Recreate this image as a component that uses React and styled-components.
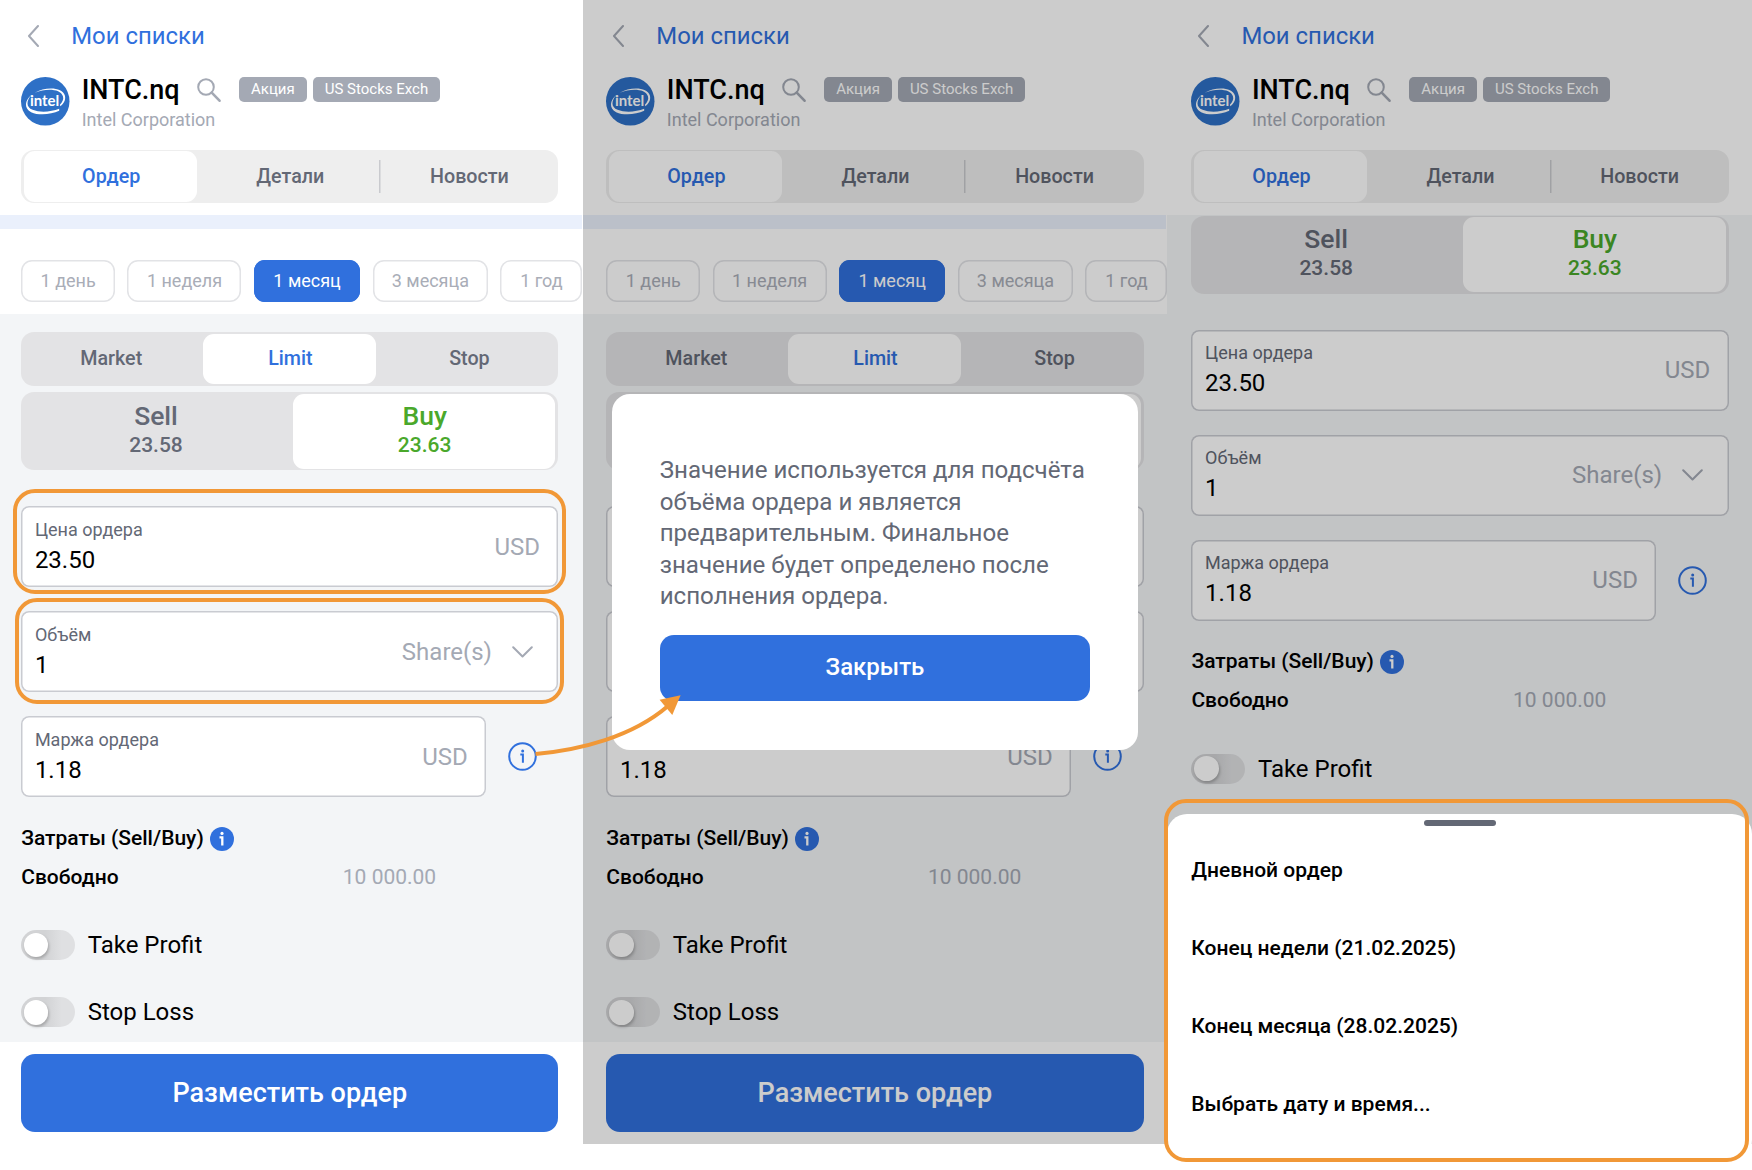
import React from "react";
import styled, { createGlobalStyle } from "styled-components";

const GlobalStyle = createGlobalStyle`
  * {
    box-sizing: border-box;
  }

  body {
    margin: 0;
    background: #fff;
    font-family: Roboto, "Liberation Sans", sans-serif;
    color: #000;
  }

  button {
    font-family: inherit;
    border: 0;
    padding: 0;
    margin: 0;
    background: none;
  }

  p {
    margin: 0;
  }
`;

const Board = styled.div`
  position: relative;
  width: 1752px;
  height: 1170px;
  display: flex;
  align-items: flex-start;
  overflow: hidden;
`;

const Phone = styled.div`
  position: relative;
  flex: none;
  width: ${({ $width }) => $width}px;
  height: 1144px;
`;

const Screen = styled.div`
  height: 100%;
  display: flex;
  flex-direction: column;
  overflow: hidden;
  background: #fff;
  --inset: ${({ $inset }) => $inset}px;
`;

const Header = styled.div`
  flex: none;
  height: 215px;
  padding-left: var(--inset);
  background: #fff;
`;

const NavRow = styled.div`
  height: 71px;
  padding-left: 6px;
  display: flex;
  align-items: center;
  gap: 32px;
  color: #3070dd;
  font-size: 23.9px;
`;

const Instrument = styled.div`
  height: 78.5px;
  padding-top: 6px;
  display: flex;
  gap: 12px;
`;

const NameLine = styled.div`
  height: 31px;
  margin-top: -3px;
  display: flex;
  align-items: center;
`;

const Ticker = styled.span`
  width: 115.4px;
  font-size: 27px;
  font-weight: 500;
`;

const Badges = styled.div`
  display: flex;
  gap: 6px;
  margin-left: 18px;
`;

const Badge = styled.span`
  height: 24.5px;
  padding: 0 12px;
  border-radius: 5px;
  background: #a4a9b4;
  color: #fff;
  font-size: 15px;
  line-height: 24px;
  white-space: nowrap;
`;

const Company = styled.div`
  margin-top: 4px;
  font-size: 18px;
  line-height: 22px;
  color: #a4a9b4;
`;

const Segmented = styled.div`
  width: 537.3px;
  height: ${({ $height }) => $height || 53.5}px;
  display: grid;
  grid-auto-flow: column;
  grid-auto-columns: 1fr;
  border-radius: 13px;
  background: ${({ $tone }) => $tone || "#e3e3e5"};
`;

const Segment = styled.button`
  margin: 1.5px 3px;
  padding-left: 1px;
  border-radius: 11px;
  display: flex;
  flex-direction: column;
  align-items: center;
  justify-content: center;
  font-size: 19.7px;
  font-weight: 500;
  color: ${({ $active }) => ($active ? "#3070dd" : "#636875")};
  background: ${({ $active }) => ($active ? "#fff" : "none")};
`;

const DividedSegment = styled(Segment)`
  margin-left: 0;
  padding-left: 4px;
  border-radius: 0;
  background: linear-gradient(#c9cace, #c9cace) left center / 1.5px 33px no-repeat;
`;

const SideSegment = styled(Segment)`
  justify-content: flex-start;
  padding-top: 6px;
  line-height: 31px;
  font-size: 26.5px;
  color: ${({ $active }) => ($active ? "#4aa82b" : "#636875")};

  small {
    margin-top: 1px;
    font-size: 21px;
    line-height: 27px;
  }
`;

const Strip = styled.div`
  flex: none;
  height: 14px;
  margin-right: 1px;
  background: #eaf0fc;
`;

const Periods = styled.div`
  flex: none;
  height: 85px;
  padding: 31px 0 0 var(--inset);
  display: flex;
  gap: 12.3px;
  background: #fff;
`;

const Period = styled.button`
  flex: none;
  width: ${({ $width }) => $width}px;
  height: 42px;
  padding-bottom: 1.5px;
  border-radius: 11px;
  font-size: 18px;
  color: ${({ $active }) => ($active ? "#fff" : "#a9adb7")};
  background: ${({ $active }) => ($active ? "#3070dd" : "#fff")};
  box-shadow: inset 0 0 0 1.5px ${({ $active }) => ($active ? "#3070dd" : "#e2e3e6")};
`;

const Body = styled.div`
  flex: 1;
  min-height: 0;
  overflow: hidden;
  padding: ${({ $top }) => $top}px 0 0 var(--inset);
  background: #f3f5f7;
`;

const TypeRow = styled.div`
  height: 60px;
`;

const Fields = styled.div`
  padding-top: 36px;
  display: grid;
  row-gap: 24px;
`;

const FieldRow = styled.div`
  display: flex;
  align-items: center;
  gap: 21.5px;
`;

const Field = styled.div`
  position: relative;
  width: ${({ $narrow }) => ($narrow ? 465 : 537.3)}px;
  height: 81px;
  padding: 0 18.5px 0 13.7px;
  display: flex;
  align-items: center;
  justify-content: space-between;
  border-radius: 8px;
  background: #fff;
  box-shadow: inset 0 0 0 1.5px #c9cbd1;
`;

const FieldLabel = styled.div`
  margin-top: 3px;
  font-size: 18px;
  line-height: 22px;
  color: #636875;
`;

const FieldValue = styled.div`
  margin-top: 1px;
  font-size: 24px;
  line-height: 36px;
`;

const Unit = styled.div`
  display: flex;
  align-items: center;
  gap: 20px;
  padding-right: ${({ $select }) => ($select ? 7 : 0)}px;
  font-size: 24px;
  color: #a4a9b4;
`;

const Highlight = styled.div`
  position: absolute;
  top: ${({ $top }) => $top}px;
  left: ${({ $left }) => $left}px;
  width: ${({ $width }) => $width}px;
  height: ${({ $height }) => $height}px;
  border: 4px solid #f19837;
  border-radius: 22px;
`;

const Costs = styled.div`
  padding-top: 21px;
  font-size: 21px;
  font-weight: 500;
`;

const CostLine = styled.div`
  height: 39px;
  display: flex;
  align-items: center;
  gap: 6px;

  svg {
    margin-top: 2px;
  }
`;

const Amount = styled.span`
  margin-left: auto;
  font-weight: 400;
  color: #a4a9b4;
`;

const FreeLine = styled(CostLine)`
  width: 415px;
`;

const Toggles = styled.div`
  padding-top: 34px;
  display: grid;
  row-gap: 37.3px;
`;

const ToggleRow = styled.label`
  height: 30px;
  display: flex;
  align-items: center;
  gap: 12.5px;
  font-size: 24px;
`;

const Track = styled.span`
  width: 54px;
  height: 30px;
  padding: 2.7px;
  border-radius: 15px;
  background: linear-gradient(90deg, #d2d3d5 45%, #dfe0e2 75%);
`;

const Thumb = styled.span`
  display: block;
  width: 24.6px;
  height: 24.6px;
  border-radius: 50%;
  background: #fff;
  box-shadow: 1px 2px 3px rgba(0, 0, 0, 0.22);
`;

const Footer = styled.div`
  flex: none;
  height: 102px;
  padding: 12px 0 0 var(--inset);
  background: #fff;
`;

const PrimaryButton = styled.button`
  width: ${({ $width }) => $width}px;
  height: ${({ $height }) => $height}px;
  border-radius: 14px;
  background: #3070dd;
  color: #fff;
  font-size: ${({ $size }) => $size}px;
  font-weight: 500;
`;

const Overlay = styled.div`
  position: absolute;
  inset: 0;
  background: rgba(0, 0, 0, 0.2);
`;

const Dialog = styled.div`
  position: absolute;
  top: 394px;
  left: 29.2px;
  width: 526.5px;
  height: 355.5px;
  padding: 61px 48px 0;
  border-radius: 18px;
  background: #fff;
`;

const DialogText = styled.p`
  height: 180.3px;
  white-space: pre-line;
  font-size: 24.1px;
  line-height: 31.5px;
  color: #636875;
`;

const CloseButton = styled(PrimaryButton)`
  padding-bottom: 2px;
`;

const Sheet = styled.div`
  position: absolute;
  top: 814px;
  left: 0;
  width: 100%;
  height: 346px;
  padding: 6px 24.3px 0;
  border-radius: 20px;
  background: #fff;
`;

const Handle = styled.div`
  width: 72px;
  height: 6px;
  margin: 0 auto 5px;
  border-radius: 3px;
  background: #636875;
`;

const SheetItem = styled.div`
  height: 78px;
  line-height: 78px;
  font-size: 21px;
  font-weight: 500;
`;

const Arrow = styled.svg`
  position: absolute;
  top: 680px;
  left: 520px;
`;

function BackIcon() {
  return (
    <svg width="12" height="22" viewBox="0 0 12 22" fill="none" stroke="#a4a9b4" strokeWidth="2">
      <path d="M11 1L2 11L11 21" strokeLinecap="round" strokeLinejoin="round" />
    </svg>
  );
}

function SearchIcon() {
  return (
    <svg width="24" height="24" viewBox="0 0 24 24" fill="none" stroke="#a4a9b4">
      <circle cx="9" cy="9" r="7.8" strokeWidth="2" />
      <path d="M14.7 14.7L22.5 22.7" strokeWidth="2.6" strokeLinecap="round" />
    </svg>
  );
}

function IntelLogo() {
  return (
    <svg width="48.5" height="48.5" viewBox="0 0 48 48">
      <circle cx="24" cy="24" r="24" fill="#2e70c6" />
      <text
        x="23.4"
        y="28.6"
        textAnchor="middle"
        fontFamily="Lato, sans-serif"
        fontWeight="700"
        fontSize="14.5"
        textLength="29"
        lengthAdjust="spacingAndGlyphs"
        fill="#fff"
      >
        intel
      </text>
      <path d="M13.5 15.5C24 9.5 41 9.5 43.5 18.5C44.5 23 42 26.5 39 29L38.5 27.5C41 24.5 42.5 22 41.5 19C39 11.5 25 11 13.5 15.5Z" fill="#fff" />
      <path d="M10 18C4 23 2.5 30.5 10 34.8C18 38.5 30 37 37.8 33.5V31.5C30 34.5 19 35.5 11.5 32.5C4.5 29.5 5.5 23.5 10 18Z" fill="#fff" />
    </svg>
  );
}

function ChevronDown() {
  return (
    <svg width="21" height="12" viewBox="0 0 21 12" fill="none" stroke="#a4a9b4" strokeWidth="2">
      <path d="M1.2 1.2L10.5 10.5L19.8 1.2" strokeLinecap="round" strokeLinejoin="round" />
    </svg>
  );
}

function InfoIcon() {
  return (
    <svg width="29" height="29" viewBox="0 0 29 29" fill="none" stroke="#3070dd">
      <circle cx="14.5" cy="14.5" r="13.3" strokeWidth="2" />
      <path d="M12.3 12.6H14.9V20.8" strokeWidth="2" />
      <circle cx="14.7" cy="8.9" r="1.5" fill="#3070dd" stroke="none" />
    </svg>
  );
}

function InfoBadge() {
  return (
    <svg width="24" height="24" viewBox="0 0 24 24" fill="none">
      <circle cx="12" cy="12" r="12" fill="#3070dd" />
      <path d="M9.5 10.3H12.3V18.5" stroke="#fff" strokeWidth="2.3" />
      <circle cx="12" cy="6.4" r="1.6" fill="#fff" />
    </svg>
  );
}

const periods = [
  { label: "1 день", width: 94 },
  { label: "1 неделя", width: 114 },
  { label: "1 месяц", width: 106.5 },
  { label: "3 месяца", width: 115.5 },
  { label: "1 год", width: 82 },
];

const sheetItems = [
  "Дневной ордер",
  "Конец недели (21.02.2025)",
  "Конец месяца (28.02.2025)",
  "Выбрать дату и время...",
];

function ScreenHeader() {
  return (
    <Header>
      <NavRow>
        <BackIcon />
        Мои списки
      </NavRow>
      <Instrument>
        <IntelLogo />
        <div>
          <NameLine>
            <Ticker>INTC.nq</Ticker>
            <SearchIcon />
            <Badges>
              <Badge>Акция</Badge>
              <Badge>US Stocks Exch</Badge>
            </Badges>
          </NameLine>
          <Company>Intel Corporation</Company>
        </div>
      </Instrument>
      <Segmented $tone="#eeeeee">
        <Segment $active>Ордер</Segment>
        <Segment>Детали</Segment>
        <DividedSegment>Новости</DividedSegment>
      </Segmented>
    </Header>
  );
}

function OrderField({ label, value, unit, select, narrow, children }) {
  return (
    <Field $narrow={narrow}>
      <div>
        <FieldLabel>{label}</FieldLabel>
        <FieldValue>{value}</FieldValue>
      </div>
      <Unit $select={select}>
        {unit}
        {select && <ChevronDown />}
      </Unit>
      {children}
    </Field>
  );
}

function Toggle({ label }) {
  return (
    <ToggleRow>
      <Track>
        <Thumb />
      </Track>
      {label}
    </ToggleRow>
  );
}

function OrderForm({ marked }) {
  return (
    <>
      <Segmented $height={78}>
        <SideSegment>
          Sell
          <small>23.58</small>
        </SideSegment>
        <SideSegment $active>
          Buy
          <small>23.63</small>
        </SideSegment>
      </Segmented>
      <Fields>
        <OrderField label="Цена ордера" value="23.50" unit="USD">
          {marked && <Highlight $top={-17} $left={-8} $width={553} $height={105} />}
        </OrderField>
        <OrderField label="Объём" value="1" unit="Share(s)" select>
          {marked && <Highlight $top={-13} $left={-6} $width={549} $height={106} />}
        </OrderField>
        <FieldRow>
          <OrderField label="Маржа ордера" value="1.18" unit="USD" narrow />
          <InfoIcon />
        </FieldRow>
      </Fields>
      <Costs>
        <CostLine>
          Затраты (Sell/Buy)
          <InfoBadge />
        </CostLine>
        <FreeLine>
          Свободно
          <Amount>10 000.00</Amount>
        </FreeLine>
      </Costs>
      <Toggles>
        <Toggle label="Take Profit" />
        <Toggle label="Stop Loss" />
      </Toggles>
    </>
  );
}

function OrderScreen({ inset, scrolled, marked }) {
  return (
    <Screen $inset={inset}>
      <ScreenHeader />
      {!scrolled && (
        <>
          <Strip />
          <Periods>
            {periods.map((period) => (
              <Period key={period.label} $width={period.width} $active={period.label === "1 месяц"}>
                {period.label}
              </Period>
            ))}
          </Periods>
        </>
      )}
      <Body $top={scrolled ? 0.5 : 18}>
        {!scrolled && (
          <TypeRow>
            <Segmented>
              <Segment>Market</Segment>
              <Segment $active>Limit</Segment>
              <Segment>Stop</Segment>
            </Segmented>
          </TypeRow>
        )}
        <OrderForm marked={marked} />
      </Body>
      <Footer>
        <PrimaryButton $width={537.3} $height={78} $size={27}>
          Разместить ордер
        </PrimaryButton>
      </Footer>
    </Screen>
  );
}

function App() {
  return (
    <>
      <GlobalStyle />
      <Board>
        <Phone $width={582.5}>
          <OrderScreen inset={21.2} marked />
        </Phone>
        <Phone $width={584.5}>
          <OrderScreen inset={23.8} />
          <Overlay />
          <Dialog>
            <DialogText>
              {"Значение используется для подсчёта\nобъёма ордера и является\nпредварительным. Финальное\nзначение будет определено после\nисполнения ордера."}
            </DialogText>
            <CloseButton $width={430.5} $height={66} $size={24}>
              Закрыть
            </CloseButton>
          </Dialog>
        </Phone>
        <Phone $width={585}>
          <OrderScreen inset={24.4} scrolled />
          <Overlay />
          <Sheet>
            <Handle />
            {sheetItems.map((item) => (
              <SheetItem key={item}>{item}</SheetItem>
            ))}
          </Sheet>
        </Phone>
        <Highlight $top={799} $left={1163.5} $width={585.5} $height={363} />
        <Arrow width="170" height="90" viewBox="0 0 170 90">
          <path d="M15.5 74C60 70 112 57 148 26" fill="none" stroke="#f19837" strokeWidth="4" />
          <path d="M160.6 15.3L139.6 19.7L152.3 35Z" fill="#f19837" />
        </Arrow>
      </Board>
    </>
  );
}

export default App;
